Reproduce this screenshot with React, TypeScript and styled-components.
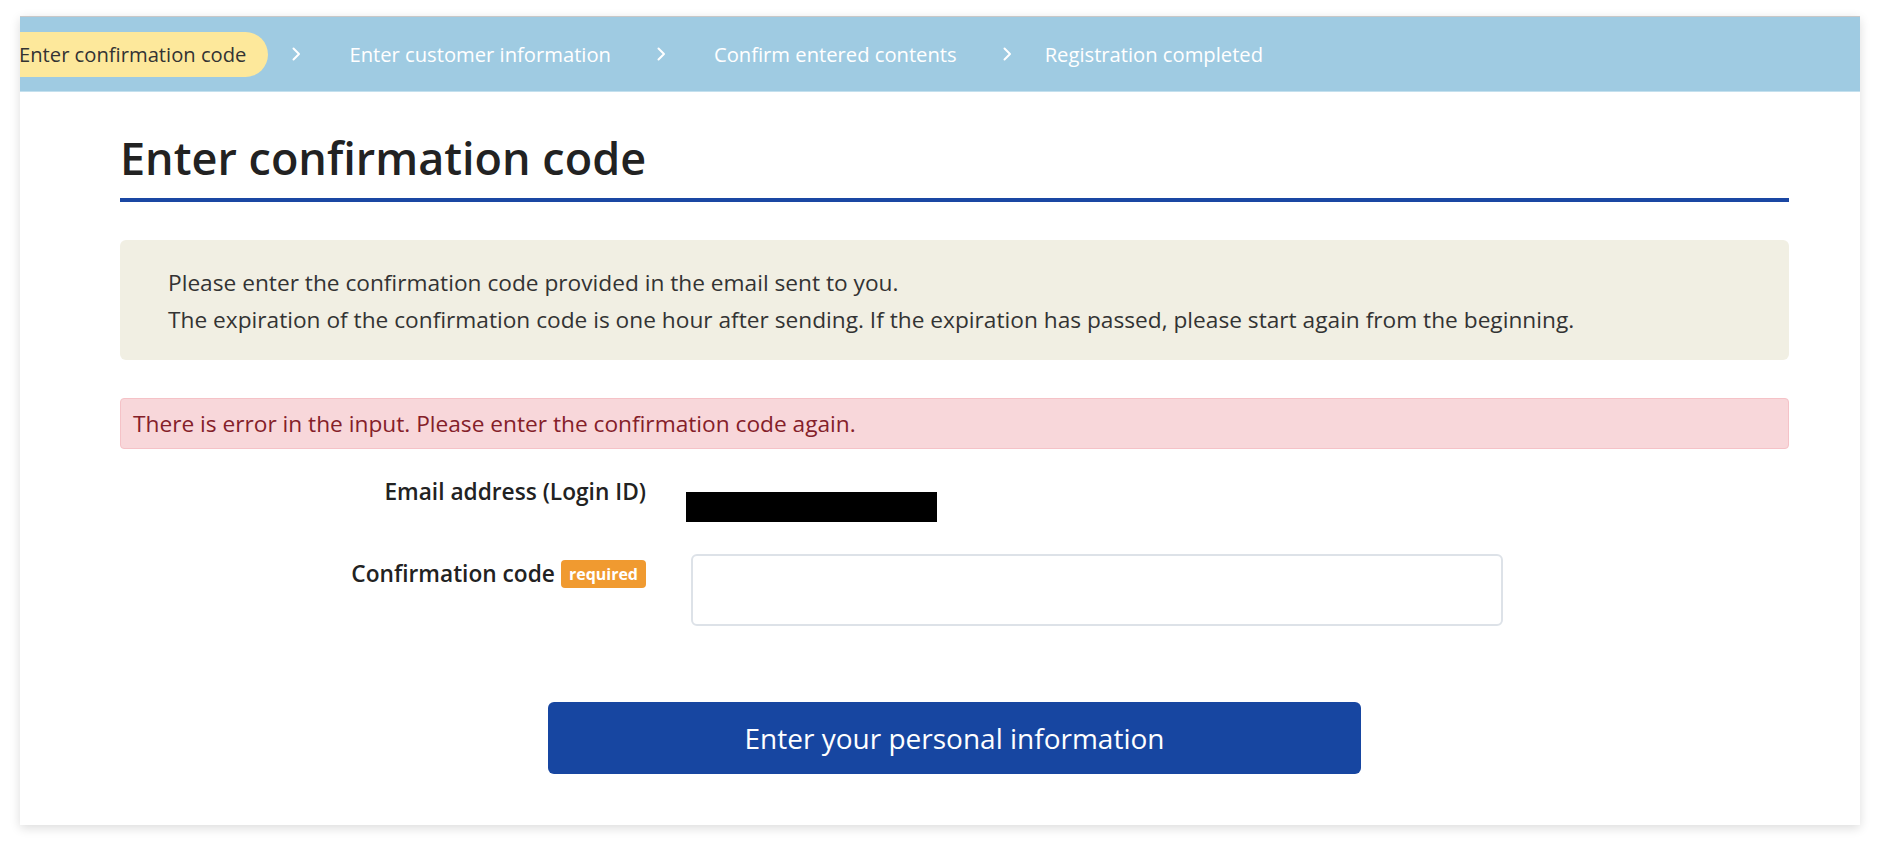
import React from "react";
import styled, { createGlobalStyle } from "styled-components";

const GlobalStyle = createGlobalStyle`
  body {
    margin: 0;
    background: #ffffff;
    font-family: "Open Sans", "Noto Sans", sans-serif;
    color: #333333;
  }
`;

const Page = styled.div`
  padding: 16px 22px 28px 20px;
`;

const Card = styled.div`
  background: #ffffff;
  border-top: 1px solid #c8c8c8;
  box-shadow: 0 3px 10px rgba(0, 0, 0, 0.14);
  overflow: hidden;
`;

// Progress bar
const StepBar = styled.nav`
  height: 74px;
  background: #9fcbe2;
  border-bottom: 1px solid #c4e0ee;
  display: flex;
  align-items: center;
`;

const StepList = styled.div`
  display: flex;
  align-items: center;
  margin-left: -23px;
`;

const Step = styled.span<{ $active?: boolean }>`
  height: 45px;
  line-height: 45px;
  padding: 0 22px;
  border-radius: 23px;
  font-size: 20.2px;
  white-space: nowrap;
  background: ${({ $active }) => ($active ? "#fde89b" : "transparent")};
  color: ${({ $active }) => ($active ? "#333333" : "#ffffff")};
`;

const Chevron = styled.svg<{ $after: number }>`
  width: 9px;
  height: 14px;
  margin: 0 ${({ $after }) => $after}px 0 24px;
  flex-shrink: 0;
`;

// Main content
const Content = styled.main`
  padding: 36px 71px 51px 100px;
`;

const Title = styled.h1`
  margin: 0;
  font-size: 45px;
  font-weight: 600;
  line-height: 60px;
  color: #222222;
  padding-bottom: 10px;
  border-bottom: 4px solid #1a47a3;
`;

const Notice = styled.div`
  margin-top: 38px;
  background: #f1efe3;
  border-radius: 6px;
  padding: 24px 48px 22px;
  font-size: 22.7px;
  line-height: 37px;

  p {
    margin: 0;
  }
`;

const ErrorBox = styled.div`
  margin-top: 38px;
  background: #f8d7da;
  border: 1px solid #f5c2c7;
  border-radius: 4px;
  padding: 10px 12px;
  font-size: 22.7px;
  line-height: 29px;
  color: #842029;
`;

const Form = styled.div`
  margin-top: 28px;
  display: grid;
  grid-template-columns: 526px 1fr;
  column-gap: 40px;
  row-gap: 32px;
  align-items: start;
`;

const Label = styled.div<{ $offset?: number }>`
  display: flex;
  justify-content: flex-end;
  align-items: center;
  gap: 6px;
  padding-top: ${({ $offset }) => $offset ?? 0}px;
  font-size: 22.7px;
  font-weight: 600;
  line-height: 30px;
  color: #222222;
`;

const Badge = styled.span`
  height: 28px;
  line-height: 28px;
  padding: 0 8px;
  border-radius: 4px;
  background: #f09a30;
  color: #ffffff;
  font-size: 16px;
  font-weight: 700;
`;

const Redacted = styled.div`
  width: 251px;
  height: 30px;
  margin-top: 15px;
  background: #000000;
`;

const CodeInput = styled.input`
  display: block;
  margin-left: 5px;
  width: 812px;
  height: 72px;
  box-sizing: border-box;
  border: 2px solid #dde2e8;
  border-radius: 6px;
  padding: 0 16px;
  font-size: 22px;
  font-family: inherit;
  outline: none;
`;

const Actions = styled.div`
  margin-top: 76px;
  display: flex;
  justify-content: center;
`;

const SubmitButton = styled.button`
  width: 813px;
  height: 72px;
  border: none;
  border-radius: 6px;
  background: #1746a1;
  color: #ffffff;
  font-family: inherit;
  font-size: 28px;
  cursor: pointer;
`;

const steps = [
  { label: "Enter confirmation code", gap: 0 },
  { label: "Enter customer information", gap: 26 },
  { label: "Confirm entered contents", gap: 26 },
  { label: "Registration completed", gap: 11 },
];

const App: React.FC = () => {
  return (
    <Page>
      <GlobalStyle />
      <Card>
        <StepBar>
          <StepList>
            {steps.map((step, i) => (
              <React.Fragment key={step.label}>
                {i > 0 && (
                  <Chevron $after={step.gap} viewBox="0 0 9 14" fill="none">
                    <polyline
                      points="1.5,1.5 7,7 1.5,12.5"
                      stroke="#ffffff"
                      strokeWidth="2"
                      strokeLinecap="round"
                      strokeLinejoin="round"
                    />
                  </Chevron>
                )}
                <Step $active={i === 0}>{step.label}</Step>
              </React.Fragment>
            ))}
          </StepList>
        </StepBar>

        <Content>
          <Title>Enter confirmation code</Title>

          <Notice>
            <p>Please enter the confirmation code provided in the email sent to you.</p>
            <p>
              The expiration of the confirmation code is one hour after sending. If the
              expiration has passed, please start again from the beginning.
            </p>
          </Notice>

          <ErrorBox>
            There is error in the input. Please enter the confirmation code again.
          </ErrorBox>

          <Form>
            <Label>Email address (Login ID)</Label>
            <Redacted />

            <Label $offset={5}>
              Confirmation code <Badge>required</Badge>
            </Label>
            <CodeInput type="text" />
          </Form>

          <Actions>
            <SubmitButton>Enter your personal information</SubmitButton>
          </Actions>
        </Content>
      </Card>
    </Page>
  );
};

export default App;
